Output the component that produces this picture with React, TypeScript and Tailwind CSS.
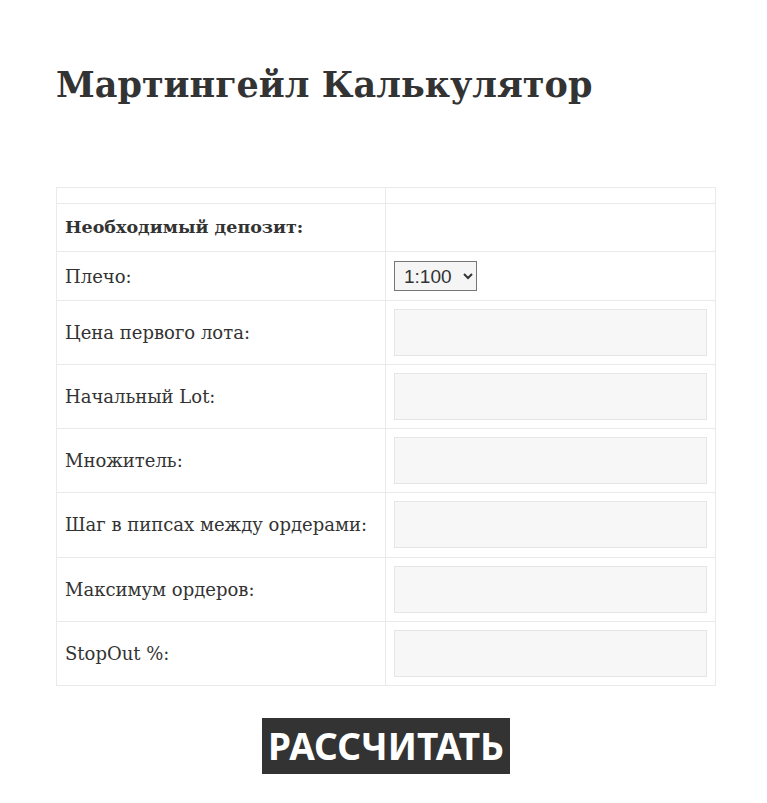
import React from 'react';

const fields = [
  'Цена первого лота:',
  'Начальный Lot:',
  'Множитель:',
  'Шаг в пипсах между ордерами:',
  'Максимум ордеров:',
  'StopOut %:',
];

const cell = 'border border-[#eaeaea] px-[8px] align-middle';

const App: React.FC = () => {
  return (
    <div className="min-h-[803px] bg-white text-[#333] font-['DejaVu_Serif',serif]">
      <div className="w-[660px] ml-[56px] pt-[59px]">
        <h1 className="text-[35px] font-bold leading-[52px] mb-[76px]">Мартингейл Калькулятор</h1>

        <table className="w-full table-fixed border-collapse border border-[#eaeaea] text-[18px]">
          <colgroup>
            <col className="w-[329px]" />
            <col />
          </colgroup>
          <tbody>
            <tr className="h-[16px]">
              <td className={cell}></td>
              <td className={cell}></td>
            </tr>
            <tr className="h-[48px]">
              <td className={`${cell} font-bold text-[17.5px]`}>Необходимый депозит:</td>
              <td className={cell}></td>
            </tr>
            <tr className="h-[49px]">
              <td className={cell}>Плечо:</td>
              <td className={cell}>
                <select
                  defaultValue="100"
                  className="h-[30px] w-[83px] border border-[#767676] bg-[#f5f5f5] pl-[5px] text-[19px] text-[#333] font-['Liberation_Sans',sans-serif]"
                >
                  <option value="50">1:50</option>
                  <option value="100">1:100</option>
                  <option value="200">1:200</option>
                  <option value="500">1:500</option>
                </select>
              </td>
            </tr>
            {fields.map((f) => (
              <tr key={f} className="h-[64.15px]">
                <td className={cell}>{f}</td>
                <td className={cell}>
                  <input
                    type="text"
                    className="block h-[47px] w-full border border-[#e5e5e5] bg-[#f7f7f7] px-[8px]"
                  />
                </td>
              </tr>
            ))}
          </tbody>
        </table>

        <div className="flex justify-center mt-[32px]">
          <button className="h-[56px] bg-[#333] px-[6px] text-[37px] font-bold leading-[56px] text-white font-['Noto_Sans',sans-serif]">
            РАССЧИТАТЬ
          </button>
        </div>
      </div>
    </div>
  );
};

export default App;
